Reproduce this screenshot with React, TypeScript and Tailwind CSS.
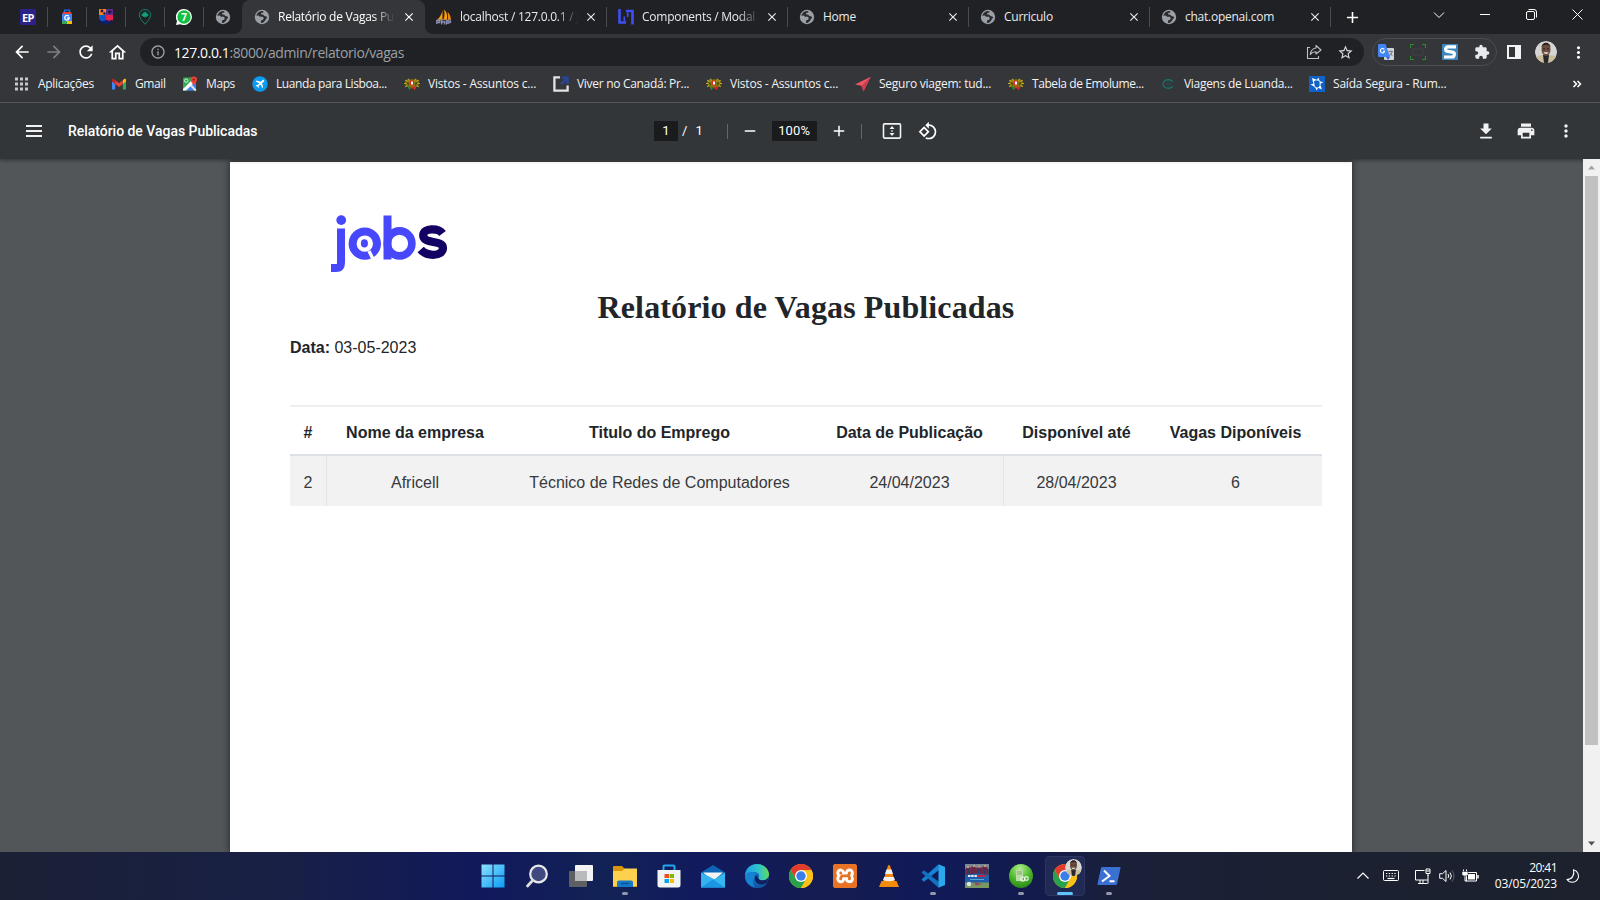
import React from 'react';
import type { ReactNode } from 'react';
import { MdArrowBack, MdArrowForward, MdRefresh, MdOutlineHome, MdInfoOutline, MdStarBorder, MdExtension, MdMoreVert, MdMenu, MdPrint, MdRotate90DegreesCcw, MdClose, MdAdd, MdRemove } from 'react-icons/md';
import { SiXampp } from 'react-icons/si';

type IconProps = { s?: number; box?: string; children: ReactNode; className?: string };
const Svg = ({ s = 16, box = '0 0 16 16', children, className = '' }: IconProps) => (
  <svg width={s} height={s} viewBox={box} fill="none" className={`shrink-0 ${className}`}>{children}</svg>
);

/* ---------- favicons ---------- */
const Globe = () => (
  <Svg>
    <circle cx="8" cy="8" r="7.2" fill="#9aa0a6" />
    <path d="M2.300 6.800L4.800 6.600 6 7.700 8.800 7.700 9.800 9.300 9 10.800 7.200 11.200 6.800 13.700 8.600 13.900 10.800 12 12.300 9.600 13.400 8.800 12.400 7.400 10.400 7 9.300 5.700 7 5.300 7.200 4 9.300 3.600 9.500 2.200 7.300 2 4.700 3.100 3 5z" fill="#2b2c30" />
  </Svg>
);
const EP = () => (
  <span className="flex h-4 w-4 items-center justify-center rounded-[1px] bg-[#2b2188] font-['Open_Sans',sans-serif] text-[11px] leading-none font-bold tracking-[-0.5px] text-white">EP</span>
);
const Luggage = () => (
  <Svg>
    <path d="M5.500 3V1.200h5V3" stroke="#1a73e8" strokeWidth="1.300" />
    <rect x="3.500" y="3" width="9" height="3" rx="1" fill="#ea4335" />
    <rect x="3" y="5" width="10" height="8" fill="#4285f4" />
    <rect x="3" y="12" width="5" height="3" fill="#34a853" />
    <rect x="8" y="12" width="5" height="3" fill="#fbbc04" />
    <path d="M9.700 7.200A2.300 2.300 0 1 0 10.300 9H8" stroke="#fff" strokeWidth="1.300" />
  </Svg>
);
const Shield = () => (
  <Svg>
    <path d="M1 0h7v6H1z" fill="#f5821f" /><path d="M8 0h7v6H8z" fill="#5b2d90" />
    <path d="M1 6h7v7L2.500 12 1 9z" fill="#1156c8" /><path d="M8 6h7v6l-2-1-2 1-3-1z" fill="#e5214d" />
    <path d="M1 11l3.500 1.500L8 11l3.500 1.500L15 11l-1 2.500L8 16l-6-2.500z" fill="#0d1f66" />
    <circle cx="4" cy="2" r="1.400" fill="#1c1c4a" /><circle cx="6.500" cy="4.500" r="1.300" fill="#1c1c4a" />
    <path d="M10 3h3.600M11.800 1.200v3.600" stroke="#211040" strokeWidth="1.300" />
  </Svg>
);
const Pin = () => (
  <Svg>
    <path d="M8 15.300C5 11.600 2.300 9 2.300 5.900a5.700 5.400 0 0 1 11.400 0C13.700 9 11 11.600 8 15.300z" stroke="#12806a" strokeWidth="1" />
    <path d="M8 2.200l.9 1.500 1-.4-.2 1.800 1.700-.6-.4 1 .8.500-2 1.700H8.300V9h-.6V7.700H6.200l-2-1.700.8-.5-.4-1 1.700.6-.2-1.800 1 .4z" fill="#13a07a" />
  </Svg>
);
const WhatsApp = () => (
  <span className="relative flex h-4 w-4 items-center justify-center">
    <Svg className="absolute inset-0"><path d="M8 0a8 8 0 1 1-3.600 15.200L0 16l1-4A8 8 0 0 1 8 0z" fill="#fff" /><circle cx="8" cy="8" r="6.700" fill="#10c143" /></Svg>
    <span className="relative font-['Open_Sans',sans-serif] text-[10px] leading-none font-bold text-white">7</span>
  </span>
);
const Sails = () => (
  <Svg>
    <path d="M6.500 1v9.500H1.500C4 8 6 5 6.500 1z" fill="#f89c0e" /><path d="M8 .5c3 2.500 3.500 6 3 10H7.500C8.600 7 8.800 4 8 .5z" fill="#f89c0e" />
    <path d="M11.700 3c2 2 3 4.500 3.300 7.500h-3z" fill="#e8870a" />
    <path d="M.8 15v-3.500h3v2h-3M5.700 11V15.500M5.700 13h3v2.500M10.500 15.500v-3.500h2.500v2h-2.500M14.500 11.500V14" stroke="#8d90b8" strokeWidth="1.300" />
    <path d="M1.500 10.800h13.500" stroke="#b9a38e" strokeWidth=".8" />
  </Svg>
);
const LT = () => (
  <Svg>
    <path d="M1.500 0v13.500H8M14.500 15.500V2H8" stroke="#3f4ff5" strokeWidth="2.600" />
    <path d="M6.300 12V7.500M9.700 3.500V8" stroke="#3f4ff5" strokeWidth="1.600" />
  </Svg>
);
const Gmail = () => (
  <Svg>
    <path d="M1 4v9.500h3.200V6.500z" fill="#4285f4" /><path d="M15 4v9.500h-3.200V6.500z" fill="#34a853" />
    <path d="M1 3.500v2L4.200 8V4.500L3 3C2 2.400 1 2.800 1 3.500z" fill="#c5221f" /><path d="M15 3.500v2L11.800 8V4.500L13 3c1-.6 2-.2 2 .5z" fill="#fbbc04" />
    <path d="M4.200 4.300L8 7.200l3.800-2.900V8L8 11 4.200 8z" fill="#ea4335" />
  </Svg>
);
const Maps = () => (
  <Svg>
    <rect x="1" y="1.500" width="13" height="13" rx="1" fill="#34a853" />
    <path d="M3 14.500L13 5l1 9.500z" fill="#4285f4" /><path d="M1 13L10.500 3.500 13 6 4 14.500H1z" fill="#fff" />
    <path d="M9 9.500l4.800 5" stroke="#e4e7ea" strokeWidth="2" />
    <circle cx="4.200" cy="4.700" r="1.700" stroke="#d5f0dc" strokeWidth="1" />
    <path d="M11.800 10C11.300 7.500 8.600 6.300 8.600 3.700a3.200 3.200 0 0 1 6.400 0C15 6.300 12.300 7.500 11.800 10z" fill="#ea4335" /><circle cx="11.800" cy="3.600" r="1.100" fill="#8e1c14" />
  </Svg>
);
const Plane = () => (
  <Svg>
    <circle cx="8" cy="8" r="7.700" fill="#0d9bf0" />
    <path d="M12 4c-.6-.5-1.400-.2-2 .5L8.800 5.700 4.500 4.600l-.8.800 3.500 1.900-1.600 1.800-1.400-.2-.6.600 1.700.9.900 1.700.6-.6-.2-1.400 1.800-1.600 1.900 3.500.8-.8-1.100-4.300L11.500 6c.7-.6 1-1.400.5-2z" fill="#fff" />
  </Svg>
);
const Crest = () => (
  <Svg>
    <path d="M1 6l2.500-3L5 4.500 8 3l3 1.500L12.500 3 15 6l-1 4-3 1.500H5L2 10z" fill="#85760f" />
    <path d="M0 7.500h3M1.300 4.300l3 1.500M14.700 4.300l-3 1.500M13 7.500h3M3 9.500l-1.800 1.300M13 9.500l1.800 1.300M4.500 2.800l1 2M11.500 2.800l-1 2" stroke="#c2ac1e" strokeWidth="1.200" />
    <path d="M3.500 5.500l1 4M12.500 5.500l-1 4M5 7.500H2.500M11 7.500h2.500" stroke="#4a410c" strokeWidth=".8" />
    <path d="M6 4.600h4v4L8 10l-2-1.400z" fill="#d92b23" /><path d="M7 5.600h2v2.400l-1 .9-1-.9z" fill="#fff" />
    <path d="M4.500 10.500l1.500 3" stroke="#2e8b30" strokeWidth="1.700" /><path d="M11.500 10.500l-1.500 3M8 11v1.500" stroke="#e12a25" strokeWidth="1.700" />
  </Svg>
);
const Ext = () => (
  <Svg><path d="M7 1.400H1.400v13.200h13.200V9.500" stroke="#e3e3e3" strokeWidth="2.300" /><path d="M8.500 1.800h6v6M14 2.300L8 8.300" stroke="#2a4592" strokeWidth="2.600" /></Svg>
);
const Arrow = () => (<Svg><path d="M15.700.7L0 8.500l6.500 1.300L8.500 15.500z" fill="#ef5663" /><path d="M15.700.7L6.500 9.800l2 5.700z" fill="#c93d4c" /></Svg>);
const CRing = () => (<Svg><path d="M12.800 5.800A5.300 4.300 0 1 0 12.800 10.200" stroke="#14756a" strokeWidth="1.400" /><path d="M11 8H7a2 1.500 0 0 1 2-1.500" stroke="#205650" /></Svg>);
const StarBox = () => (
  <Svg><rect width="16" height="16" fill="#0e62c8" />
    <path d="M3 2l4 1.600-3 2.600zM9.500 1.500l1 3.200-2.500-.6zM14.500 6l-3.600 2-.3-2.500zM12.800 13.500L9.500 12l2.300-2.500zM7.500 14.500l-1-3.500 2.400 1.500zM1.500 8.500l3.800-1L5 10.500z" fill="#fff" />
    <path d="M4.500 5l2-1h3l1.800 2-.3 4-2 2H6.500L5 9z" stroke="#fff" strokeWidth=".9" /></Svg>
);
const AppsGrid = () => (
  <Svg>{[1, 6, 11].map(x => [1.500, 6.500, 11.500].map(y => <rect key={`${x}-${y}`} x={x} y={y} width="3" height="3" fill="#c6c8cb" />))}</Svg>
);
const Face = ({ s }: { s: number }) => (
  <Svg s={s} box="0 0 22 22" className="overflow-hidden rounded-full">
    <circle cx="11" cy="11" r="11" fill="#d5d6d4" />
    <path d="M0 17c3-3 6-2.500 8-3h6c3 .5 6 0 8 3v5H0z" fill="#c9bf9c" />
    <path d="M8 14h6l-1 8H9z" fill="#26262c" /><ellipse cx="11" cy="8.500" rx="4.500" ry="6.500" fill="#6b4c3f" />
    <path d="M6.500 6.500C6.500 0 15.500 0 15.500 6.500L14 4.500Q11 3 8 4.500z" fill="#2c211e" /><path d="M8.500 11.300h5c-.8 2.200-4.200 2.200-5 0z" fill="#f0e4dc" />
    <path d="M8.200 7.800h1.600M12.200 7.800h1.600" stroke="#1f1512" />
  </Svg>
);

/* ---------- tab strip ---------- */
const pinned = [EP, Luggage, Shield, Pin, WhatsApp, Globe];
const tabs = [
  { icon: <Sails />, title: 'localhost / 127.0.0.1 / j', fade: true, w: 'w-[182px]', tw: 'w-[121px]' },
  { icon: <LT />, title: 'Components / Modal -', fade: true, w: 'w-[181px]', tw: 'w-[120px]' },
  { icon: <Globe />, title: 'Home', fade: false, w: 'w-[181px]', tw: 'w-[120px]' },
  { icon: <Globe />, title: 'Curriculo', fade: false, w: 'w-[181px]', tw: 'w-[120px]' },
  { icon: <Globe />, title: 'chat.openai.com', fade: false, w: 'w-[181px]', tw: 'w-[120px]' },
];
const fadeCls = '[mask-image:linear-gradient(to_right,black_80%,transparent_98%)]';

const TabStrip = () => (
  <div className="flex h-[34px] bg-[#202124] text-[12px] tracking-[-0.25px] text-[#e8eaed]">
    <div className="flex h-full pl-[9px]">
      {pinned.map((I, i) => (
        <div key={i} className="flex w-[39px] items-center">
          <div className="flex flex-1 justify-center"><I /></div>
          <div className={i < 5 ? 'h-5 w-px bg-[#4a4c50]' : 'h-5 w-px'} />
        </div>
      ))}
    </div>
    <div className="relative -ml-[1px] flex h-full w-[183px] items-center rounded-t-lg bg-[#35363a] pl-[12px] text-white">
      <Svg s={8} box="0 0 8 8" className="absolute bottom-0 -left-2"><path d="M8 0v8H0a8 8 0 0 0 8-8z" fill="#35363a" /></Svg>
      <Svg s={8} box="0 0 8 8" className="absolute -right-2 bottom-0"><path d="M0 0v8h8a8 8 0 0 1-8-8z" fill="#35363a" /></Svg>
      <Globe />
      <div className={`ml-2 w-[119px] overflow-hidden whitespace-nowrap ${fadeCls}`}>Relatório de Vagas Publicadas</div>
      <MdClose size={14} className="ml-[5px]" />
    </div>
    {tabs.map((t, i) => (
      <div key={i} className={`flex h-full items-center pl-[11px] ${t.w}`}>
        {t.icon}
        <div className={`ml-2 overflow-hidden whitespace-nowrap ${t.tw} ${t.fade ? fadeCls : ''}`}>{t.title}</div>
        <MdClose size={14} className="ml-[3px] shrink-0" />
        <div className="ml-auto h-5 w-px bg-[#4a4c50]" />
      </div>
    ))}
    <MdAdd size={19} className="mt-[8px] ml-[12px] text-white" />
    <div className="ml-auto flex h-[29px] items-center text-white">
      <div className="flex w-[46px] justify-center"><Svg s={12} box="0 0 12 12"><path d="M1 3.500l5 5 5-5" stroke="currentColor" /></Svg></div>
      <div className="flex w-[46px] justify-center"><div className="h-px w-[10px] bg-white" /></div>
      <div className="flex w-[46px] justify-center"><Svg s={11} box="0 0 11 11"><rect x=".5" y="2.500" width="8" height="8" rx="1.500" stroke="currentColor" /><path d="M2.500.5H8A2.500 2.500 0 0 1 10.500 3v5.500" stroke="currentColor" /></Svg></div>
      <div className="flex w-[46px] justify-center"><Svg s={11} box="0 0 11 11"><path d="M.5.500l10 10M10.500.5l-10 10" stroke="currentColor" /></Svg></div>
    </div>
  </div>
);

/* ---------- toolbar ---------- */
const Translate = () => (
  <Svg><rect x="6" y="4" width="10" height="12" rx="1" fill="#d0d3d8" /><path d="M0 1a1 1 0 0 1 1-1h6.500L12 13H1a1 1 0 0 1-1-1z" fill="#4285f4" /><path d="M8 13h4l-2 3z" fill="#3367d6" />
    <path d="M6.300 5.300a2.200 2.200 0 1 0 .4 1.900H5" stroke="#fff" strokeWidth="1.100" /><path d="M10.500 7.500h4.500M12.700 6.500v1M11 12c2-1 2.700-2.500 3-4.500M11.500 9l3 3" stroke="#6d737b" strokeWidth=".9" /></Svg>
);
const Toolbar = () => (
  <div className="flex h-[36px] items-center bg-[#35363a] pl-[12px] text-white">
    <MdArrowBack size={20} />
    <MdArrowForward size={20} className="ml-3 text-[#7d7e82]" />
    <MdRefresh size={20} className="ml-3" />
    <MdOutlineHome size={21} className="ml-[11px]" />
    <div className="ml-[12px] flex h-7 w-[1224px] items-center rounded-full bg-[#202124] pl-[10px] text-[#9aa0a6]">
      <MdInfoOutline size={16} />
      <div className="ml-2 text-[14px] tracking-[-0.4px] whitespace-nowrap"><span className="text-white">127.0.0.1</span>:8000/admin/relatorio/vagas</div>
      <Svg s={16} className="mr-[15px] ml-auto"><path d="M4 3.500H1.500v11h11V12" stroke="#bdc1c6" strokeWidth="1.100" /><path d="M10 1.500L15 6l-5 4V7.800C7.500 7.700 5.800 8.500 4.300 10.500 4.700 7 6.500 4.500 10 4z" stroke="#bdc1c6" strokeWidth="1.100" strokeLinejoin="round" /></Svg>
      <MdStarBorder size={17} className="mr-[10px] text-[#d5d7da]" />
    </div>
    <div className="ml-2 flex h-7 w-[125px] items-center gap-4 rounded-full border border-[#4b4d52] pl-[5px]">
      <Translate />
      <Svg><path d="M.5 4V.5H4M12 .5h3.500V4M15.500 12v3.500H12M4 15.500H.5V12" stroke="#2c8a2e" strokeWidth="1.200" /><rect x="3" y="5" width="10" height="6" stroke="#3e4044" /></Svg>
      <Svg><rect width="16" height="16" rx="1" fill="#3f86bb" /><path d="M14 2.800H6C3.300 2.800 2.500 7 5.500 7.300l5 .8c3 .5 2 4.900-.5 4.900H2" stroke="#fff" strokeWidth="3.200" /></Svg>
      <MdExtension size={16} className="shrink-0 text-[#e8eaed]" />
    </div>
    <Svg s={14} box="0 0 14 14" className="ml-[10px]"><path d="M0 0h14v14H0zM2 2v10h6V2z" fill="#f1f3f4" fillRule="evenodd" /></Svg>
    <div className="ml-[14px]"><Face s={22} /></div>
    <MdMoreVert size={19} className="ml-[12px]" />
  </div>
);

/* ---------- bookmarks ---------- */
const marks: [ReactNode, string, string][] = [
  [<AppsGrid />, 'Aplicações', 'w-[97px] tracking-[-0.3px]'],
  [<Gmail />, 'Gmail', 'w-[71px] tracking-[-0.4px]'],
  [<Maps />, 'Maps', 'w-[70px] tracking-[-0.4px]'],
  [<Plane />, 'Luanda para Lisboa...', 'w-[152px] tracking-[-0.4px]'],
  [<Crest />, 'Vistos - Assuntos c...', 'w-[149px] tracking-[-0.2px]'],
  [<Ext />, 'Viver no Canadá: Pr...', 'w-[153px] tracking-[-0.3px]'],
  [<Crest />, 'Vistos - Assuntos c...', 'w-[149px] tracking-[-0.2px]'],
  [<Arrow />, 'Seguro viagem: tud...', 'w-[153px] tracking-[-0.24px]'],
  [<Crest />, 'Tabela de Emolume...', 'w-[152px] tracking-[-0.42px]'],
  [<CRing />, 'Viagens de Luanda...', 'w-[149px] tracking-[-0.3px]'],
  [<StarBox />, 'Saída Segura - Rum...', 'w-[140px] tracking-[-0.2px]'],
];
const Bookmarks = () => (
  <div className="flex h-[33px] items-center border-b border-[#5f6368] bg-[#35363a] pb-[4px] pl-[14px] text-[12px] text-[#f1f3f4]">
    {marks.map(([icon, label, cls], i) => (
      <div key={i} className={`flex shrink-0 items-center gap-2 whitespace-nowrap ${cls}`}>{icon}<span>{label}</span></div>
    ))}
    <Svg s={10} box="0 0 10 10" className="mr-[18px] ml-auto"><path d="M1.500 2l3 3-3 3M5.500 2l3 3-3 3" stroke="#fff" strokeWidth="1.500" /></Svg>
  </div>
);

/* ---------- PDF viewer ---------- */
const PdfBar = () => (
  <div className="relative z-10 flex h-[56px] items-center bg-[#323639] font-[Roboto,sans-serif] text-[#f1f1f1] shadow-[0_1px_4px_rgba(0,0,0,0.45)]">
    <div className="flex w-[654px] items-center pl-[22px]">
      <Svg s={24} box="0 0 24 24"><path d="M4 6h16v2H4zM4 11h16v2H4zM4 16h16v2H4z" fill="#f1f1f1" /></Svg>
      <span className="ml-[22px] text-[14px] font-medium tracking-[-0.03px] text-white">Relatório de Vagas Publicadas</span>
    </div>
    <div className="flex items-center text-[13px] text-white">
      <span className="flex h-5 w-6 items-center justify-center bg-[#191b1c]">1</span>
      <span className="ml-[4px]">/</span><span className="ml-[8px]">1</span>
      <div className="ml-[24px] h-[15px] w-px bg-[#63676a]" />
      <MdRemove size={18} className="ml-[13px]" />
      <span className="ml-[13px] flex h-5 w-[45px] items-center justify-center bg-[#191b1c] tracking-[0.15px]">100%</span>
      <MdAdd size={18} className="ml-[13px]" />
      <div className="ml-[13px] h-[15px] w-px bg-[#63676a]" />
      <Svg s={20} box="0 0 20 20" className="ml-[20px]"><rect x="1.500" y="2.900" width="17" height="14.200" rx="1" stroke="#f1f1f1" strokeWidth="1.600" /><path d="M10 5l2.500 3h-5zM10 15l2.500-3h-5zM9.300 9.300h1.400v1.400H9.300z" fill="#f1f1f1" /></Svg>
      <MdRotate90DegreesCcw size={20} className="ml-[16px]" />
    </div>
    <div className="ml-auto flex items-center gap-5 pr-[24px]">
      <Svg s={20} box="0 0 24 24"><path d="M5 21h14v-2H5zM19 9h-4V3H9v6H5l7 7z" fill="#f1f1f1" /></Svg>
      <MdPrint size={20} />
      <MdMoreVert size={20} />
    </div>
  </div>
);

const Logo = () => (
  <svg width="118" height="60" viewBox="0 0 118 60" fill="none" className="ml-[101px] block">
    <circle cx="10.200" cy="5.100" r="4.900" fill="#4747fb" />
    <path d="M10 13.500V47.500Q10 53 5 53H0" stroke="#4747fb" strokeWidth="8" />
    <circle cx="33.800" cy="28.600" r="12.200" stroke="#4747fb" strokeWidth="8" />
    <path d="M38 36L42.500 45" stroke="#fff" strokeWidth="3.400" />
    <ellipse cx="33.400" cy="28.400" rx="3.500" ry="4.100" fill="#4747fb" />
    <path d="M56.500.5v44" stroke="#4747fb" strokeWidth="8" />
    <ellipse cx="68.600" cy="28.400" rx="12.300" ry="12.500" stroke="#4747fb" strokeWidth="7.600" />
    <path d="M111.500 18.500C107.500 13 92.200 12.500 92.200 20.500C92.200 29.500 112 24.500 112 33C112 41.500 96 42 89.700 34.500" stroke="#150063" strokeWidth="8.200" />
  </svg>
);

const cols = 'grid grid-cols-[37px_176px_313px_188px_145px_173px]';
const head = ['#', 'Nome da empresa', 'Titulo do Emprego', 'Data de Publicação', 'Disponível até', 'Vagas Diponíveis'];
const row = ['2', 'Africell', 'Técnico de Redes de Computadores', '24/04/2023', '28/04/2023', '6'];
const isRuled = (i: number) => i === 0 || i === 3;

const Page = () => (
  <div className="mt-[3px] ml-[230px] h-[690px] w-[1122px] bg-white font-['Liberation_Sans',Arial,sans-serif] text-[16px] text-[#212529] shadow-[0_0_6px_1px_rgba(30,30,34,0.7)]">
    <div className="pt-[53px]"><Logo /></div>
    <h1 className="mt-[13px] ml-[60px] w-[1032px] text-center font-['Liberation_Serif',serif] text-[32px] leading-[38px] font-bold tracking-[0.12px] whitespace-nowrap">Relatório de Vagas Publicadas</h1>
    <p className="mt-[10px] ml-[60px] leading-6"><b>Data:</b> 03-05-2023</p>
    <div className="mt-[45px] ml-[60px] w-[1032px]">
      <div className={`${cols} h-[51px] border-t-2 border-b-2 border-t-[#eeeff0] border-b-[#dee2e6] text-center leading-[52px] font-bold`}>
        {head.map((h, i) => <div key={h} className={isRuled(i) ? 'border-r border-transparent whitespace-nowrap' : 'whitespace-nowrap'}>{h}</div>)}
      </div>
      <div className={`${cols} h-[50px] bg-[#f2f2f2] text-center leading-[54px] text-[#36393d]`}>
        {row.map((c, i) => <div key={i} className={isRuled(i) ? 'h-[50px] border-r border-[#e3e5e8] whitespace-nowrap' : 'h-[50px] whitespace-nowrap'}>{c}</div>)}
      </div>
    </div>
  </div>
);

const Viewer = () => (
  <div className="flex h-[693px] overflow-hidden bg-[#525659]">
    <div className="h-full flex-1 overflow-hidden"><Page /></div>
    <div className="relative z-20 flex w-[17px] flex-col items-center bg-[#f1f1f1]">
      <Svg s={7} box="0 0 7 4" className="mt-[5px]"><path d="M0 4l3.500-4L7 4z" fill="#a3a3a3" /></Svg>
      <div className="mt-[5px] h-[569px] w-[13px] bg-[#c1c1c1]" />
      <Svg s={7} box="0 0 7 4" className="mt-auto mb-[5px]"><path d="M0 0l3.500 4L7 0z" fill="#505050" /></Svg>
    </div>
  </div>
);

/* ---------- taskbar ---------- */
const Chrome = ({ s = 24 }: { s?: number }) => (
  <Svg s={s} box="0 0 24 24">
    <circle cx="12" cy="12" r="12" fill="#fbc116" />
    <path d="M1.600 6A12 12 0 0 1 22.400 6H12L6.800 15z" fill="#e33b2e" />
    <path d="M1.600 6A12 12 0 0 0 12 24l5.200-9-10.400 0z" fill="#2aa14b" />
    <path d="M22.400 6A12 12 0 0 1 12 24l5.200-9L12 6z" fill="#fbc116" />
    <circle cx="12" cy="12" r="6" fill="#fff" /><circle cx="12" cy="12" r="4.700" fill="#3b7eea" />
  </Svg>
);
const apps: ReactNode[] = [
  <Svg s={24} box="0 0 24 24"><defs><linearGradient id="win" x1="0" y1="0" x2="1" y2="1"><stop stopColor="#8be3ff" /><stop offset="1" stopColor="#0a9bf5" /></linearGradient></defs><path d="M.5.500h11v11H.5zM12.500.5h11v11h-11zM.5 12.500h11v11H.5zM12.500 12.500h11v11h-11z" fill="url(#win)" /></Svg>,
  <Svg s={24} box="0 0 24 24"><circle cx="13.500" cy="10" r="8.300" fill="#414a80" stroke="#e8e8ea" strokeWidth="2.200" /><path d="M7.600 16.500L2.500 22" stroke="#dcdcdf" strokeWidth="2.800" strokeLinecap="round" /></Svg>,
  <Svg s={24} box="0 0 24 24"><rect x="0" y="7" width="18" height="16" rx="1" fill="#5f6063" /><rect x="6" y="1" width="18" height="16" rx="1" fill="#f3f3f4" /><rect x="6" y="7" width="12" height="10" fill="#b9babb" /></Svg>,
  <Svg s={24} box="0 0 24 24"><path d="M0 3a1 1 0 0 1 1-1h8l2.500 2.500V8H0z" fill="#d9940c" /><path d="M0 7h9l2.500-2.500H24V23H0z" fill="#fdd14d" /><path d="M0 22h24v1H0z" fill="#e3a31b" /><path d="M4 23v-4.500A2 2 0 0 1 6 16.500h12a2 2 0 0 1 2 2V23z" fill="#1478c8" /><path d="M8 19.500h8" stroke="#0c4f8e" strokeWidth="1.300" /></Svg>,
  <Svg s={24} box="0 0 24 24"><path d="M6.500 7V2.500A1 1 0 0 1 7.500 1.500h9a1 1 0 0 1 1 1V7" stroke="#22a6ee" strokeWidth="2" /><path d="M.5 6h23v15a2.500 2.500 0 0 1-2.500 2.500H3A2.500 2.500 0 0 1 .5 21z" fill="#f2f3f5" /><path d="M7.500 10H12v4H7.500z" fill="#f25022" /><path d="M12.700 10h4.300v4h-4.300z" fill="#7fba00" /><path d="M7.500 15H12v4H7.500z" fill="#00a4ef" /><path d="M12.700 15h4.300v4h-4.300z" fill="#ffb900" /></Svg>,
  <Svg s={24} box="0 0 24 24"><path d="M0 8.500L12 1l12 7.500V14H0z" fill="#0e64b4" /><path d="M2 8.500h20L12 17z" fill="#f4f5f7" /><path d="M0 8.500L17 17l-17 6.500z" fill="#35b3f0" /><path d="M24 8.500V23.500H0L15.500 14z" fill="#35b8f1" /><path d="M12 15.500l12 8H0z" fill="#1b96e2" /></Svg>,
  <Svg s={24} box="0 0 24 24"><defs><linearGradient id="edge" x1="0" y1="0.400" x2="1" y2="0.300"><stop stopColor="#1d9ce8" /><stop offset=".6" stopColor="#30c5c9" /><stop offset="1" stopColor="#66dc4c" /></linearGradient></defs><circle cx="12" cy="12" r="12" fill="#1368b8" /><path d="M0 12C0 5 5 0 12 0s12 5 12 10.500c0 4-3 6-6.500 6S13 15 14 13c1-3-2-5-5.500-5C4 8 1 10 0 12z" fill="url(#edge)" /><path d="M0 12c1-3 4.500-4.500 8-4 3 .4 3.500 2 3.500 2-4 2-4 9 1.500 11.500C7 25 0 19 0 12z" fill="#1583d2" /><path d="M11 11c-3 4 0 10 6 9.500 2 0 3.500-.7 5-1.800L24 12l-2 3c-3 2-8 1.500-8.500-.5z" fill="#101f60" /><path d="M8.500 15c0 6 7 8 13.500 4-2 3.500-6 5-10 5-3-1.500-4.500-5-3.500-9z" fill="#1157a6" /></Svg>,
  <Chrome />,
  <span className="flex h-6 w-6 items-center justify-center rounded-[3px] bg-[radial-gradient(circle,#fff_60%,#e87325_61%)]"><SiXampp size={24} className="text-[#e87325]" /></span>,
  <Svg s={24} box="0 0 24 24"><path d="M4.500 17h15l2.500 6H2z" fill="#f28a0c" /><path d="M11 1.500q1-1 2 0L18.300 18.500q-6.300 3-12.600 0z" fill="#f58b0e" /><path d="M9.500 5.500h5l1.500 4.500H8zM7.100 13h9.800l1 3q-6 2.500-11.800 0z" fill="#f1f1f1" /></Svg>,
  <Svg s={24} box="0 0 24 24"><path d="M17.500.3L.5 15.500l2.300 2.300L18 6z" fill="#1583d2" /><path d="M17.500 23.700L.5 8.500l2.300-2.300L18 18z" fill="#1272bd" /><path d="M17.500.3L24 3v18l-6.500 2.700z" fill="#2ba8ee" /></Svg>,
  <Svg s={24} box="0 0 24 24"><rect width="24" height="24" fill="#3b4664" /><path d="M0 0h24v5H0z" fill="#7c8894" /><path d="M1 4l3-1 2 1v8H1zM6 3l3-1 2 2v7H6zM11 4l3-1 3 1v7h-6zM17 3l3-1 3 2v8h-6z" fill="#6b2945" /><path d="M2 2h2v2H2zM8 1h2v2H8zM13 1.500h2v2h-2zM19 1h2v2h-2z" fill="#c29b84" /><path d="M3 5h1v5H3zM8 4h1v5H8zM13 5h1v5h-1zM19 5h1v5h-1z" fill="#26386e" /><path d="M0 11q12-3 24 0v8H0z" fill="#1f5ea8" /><path d="M3 12h9" stroke="#e9edf4" strokeWidth="2" strokeDasharray="2.500 .7" /><path d="M13 12h8" stroke="#c32343" strokeWidth="2" /><path d="M5 15.500h14" stroke="#58a5d6" /><path d="M0 18.500h24V24H0z" fill="#7b9563" /><circle cx="4" cy="20" r="2.200" fill="#dfe4e4" /><path d="M9 18l8 2-6 1.500z" fill="#8c4a5a" /></Svg>,
  <Svg s={24} box="0 0 24 24"><defs><radialGradient id="grn" cx=".45" cy=".2" r=".9"><stop stopColor="#b2ee8d" /><stop offset=".5" stopColor="#4eb92b" /><stop offset="1" stopColor="#247a14" /></radialGradient></defs><circle cx="12" cy="12" r="12" fill="url(#grn)" /><path d="M7 6h7v11H7z" fill="#b9dba6" /><path d="M8 8h5M8 10h5" stroke="#84ad70" /><circle cx="13.800" cy="15" r="2" stroke="#ecf5e6" strokeWidth="1.200" /><circle cx="17.500" cy="14.500" r="1.800" stroke="#ecf5e6" strokeWidth="1.200" /></Svg>,
  <span className="relative"><Chrome /><span className="absolute -top-[5px] left-[12px]"><Face s={17} /></span></span>,
  <Svg s={24} box="0 0 24 24"><path d="M5 3h17.500a1 1 0 0 1 1 1.200L20 20a1.300 1.300 0 0 1-1.200 1H1.500a1 1 0 0 1-1-1.200L4 4a1.300 1.300 0 0 1 1-1z" fill="#3a70d2" /><path d="M7 6.500l5.500 5.500L5 17.500M12.500 17.300h5" stroke="#fff" strokeWidth="2" /></Svg>,
];
const running = [3, 10, 12, 14];

const Taskbar = () => (
  <div className="flex h-12 items-center bg-[linear-gradient(90deg,#1b2035_0%,#182046_18%,#11195c_30%,#122255_38%,#111a5d_44%,#151c50_52%,#101a58_58%,#131b4c_65%,#1a2038_70%,#1b2130_85%,#1c212d_100%)] text-white">
    <div className="flex h-full pl-[471px]">
      {apps.map((a, i) => (
        <div key={i} className="relative flex h-full w-11 items-center justify-center">
          {i === 13 && <div className="absolute inset-x-[2px] top-[4px] bottom-[4px] rounded-[4px] border border-[#2d3560] bg-[#212a55]" />}
          <div className="relative flex">{a}</div>
          {running.includes(i) && <div className="absolute bottom-[5px] left-[19px] h-[3px] w-[6px] rounded-full bg-[#9498ab]" />}
          {i === 13 && <div className="absolute bottom-[5px] left-[14px] h-[3px] w-4 rounded-full bg-[#5fc4fa]" />}
        </div>
      ))}
    </div>
    <div className="ml-auto flex items-center pr-[20px]">
      <Svg s={12} box="0 0 12 12"><path d="M.5 8.500L6 3l5.500 5.500" stroke="#fff" strokeWidth="1.200" /></Svg>
      <Svg s={16} className="ml-[14px]"><rect x=".5" y="2.500" width="15" height="10" rx="1" stroke="#fff" /><path d="M3 5.500h10M3 8h10" stroke="#fff" strokeWidth="1.200" strokeDasharray="1.300 1.500" /><path d="M4.500 10.500h7" stroke="#fff" strokeWidth="1.200" /></Svg>
      <Svg s={17} box="0 0 17 17" className="ml-[15px]"><path d="M10.500 2.500H1.500v9.500h10.500M12 12h2M6 12v3.500M9 12v3.500M4 15.500h9.500M14 7v8.500" stroke="#fff" strokeWidth="1" /><path d="M12 1h4v4.500h-4zM12 3h4M14 5v3" stroke="#fff" /></Svg>
      <Svg s={16} className="ml-[8px]"><path d="M.7 5.700h2.800L7 2.500v11l-3.500-3.200H.7z" stroke="#fff" strokeLinejoin="round" /><path d="M9 6q1.500 2 0 4M11 4.500q2.800 3.500 0 7" stroke="#fff" /><path d="M13 2.500q4 5.500 0 11" stroke="#5d616b" /></Svg>
      <Svg s={17} box="0 0 17 17" className="ml-[7px]"><path d="M4.500 4.500h10v8.500h-10z" stroke="#fff" strokeLinejoin="round" /><path d="M6 6h7v5.500H6z" fill="#fff" /><path d="M16 7v3.500" stroke="#fff" strokeWidth="1.500" /><path d="M1.500 1.500v3M4.500 1.500v3M3 7v6h2" stroke="#fff" /><path d="M0 3.500h6v3L4.500 8h-3L0 6.500z" fill="#fff" stroke="#1b2130" strokeWidth=".6" /></Svg>
      <div className="ml-[11px] w-[67px] text-right text-[12px] leading-4 tracking-[-0.15px] whitespace-nowrap"><div className="tracking-[-0.55px]">20:41</div><div>03/05/2023</div></div>
      <Svg s={14} box="0 0 14 14" className="ml-[9px]"><path d="M7.500.8A6.300 6.300 0 1 1 1 10.500C6 10.500 8.800 6 7.500.8z" stroke="#fff" strokeWidth="1.100" strokeLinejoin="round" /></Svg>
    </div>
  </div>
);

export default function App() {
  return (
    <div className="h-[900px] w-[1600px] overflow-hidden bg-[#525659] font-['Open_Sans','Noto_Sans',sans-serif]">
      <TabStrip />
      <Toolbar />
      <Bookmarks />
      <PdfBar />
      <Viewer />
      <Taskbar />
    </div>
  );
}
